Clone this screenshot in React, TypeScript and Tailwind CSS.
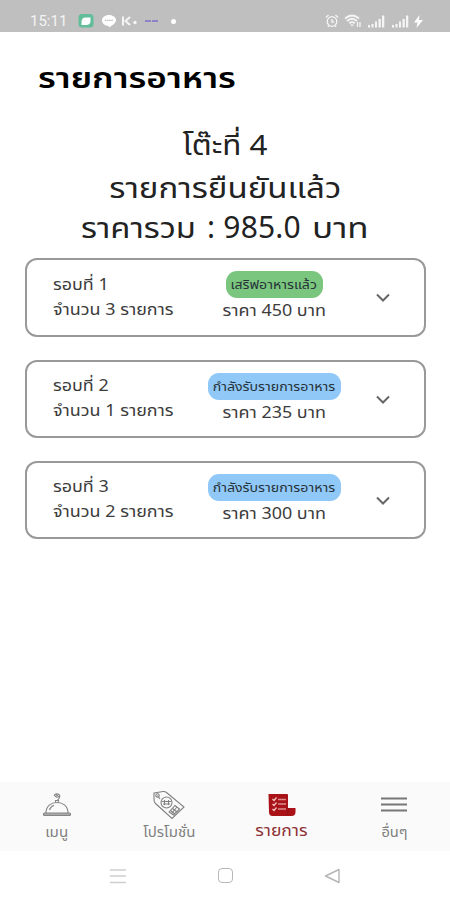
import React from 'react'

interface Round {
  title: string
  count: string
  status: string
  price: string
  served: boolean
}

const rounds: Round[] = [
  { title: 'รอบที่ 1', count: 'จำนวน 3 รายการ', status: 'เสริฟอาหารแล้ว', price: 'ราคา 450 บาท', served: true },
  { title: 'รอบที่ 2', count: 'จำนวน 1 รายการ', status: 'กำลังรับรายการอาหาร', price: 'ราคา 235 บาท', served: false },
  { title: 'รอบที่ 3', count: 'จำนวน 2 รายการ', status: 'กำลังรับรายการอาหาร', price: 'ราคา 300 บาท', served: false },
]

const SignalIcon = () => (
  <svg width="17" height="13" viewBox="0 0 17 13" fill="#f5f5f5">
    <rect x="0" y="10" width="2" height="2.5" />
    <rect x="3.5" y="9" width="2" height="3.5" />
    <rect x="7" y="6.5" width="2" height="6" />
    <rect x="10.5" y="4" width="2.3" height="8.5" />
    <rect x="14" y="0.5" width="2.3" height="12" />
  </svg>
)

const StatusBar = () => (
  <div className="h-8 bg-[#bfbfbf] pt-[11px] pl-[30px] pr-[27px] flex justify-between">
    <div className="flex items-center h-6 -mt-0.5">
      <span className="w-[39px] text-[15px] leading-6 text-[#f3f3f3] font-['Roboto',sans-serif] whitespace-nowrap">15:11</span>
      <svg className="ml-[9px]" width="16" height="16" viewBox="0 0 16 16">
        <rect x="0.5" y="1" width="15" height="13.5" rx="3.5" fill="#62bd9b" />
        <path d="M3.500 12V9q0-4.500 4-4.500h5v3.500q0 4-4.500 4z" fill="#fff" />
      </svg>
      <svg className="ml-[7px]" width="16" height="14" viewBox="0 0 16 14">
        <path d="M8 1c4 0 7 2.300 7 5.200 0 3-4 5.300-6.500 7-.8.500-.7-.3-.7-1.300C4 11.700 1 9.500 1 6.200 1 3.300 4 1 8 1z" fill="#fff" />
        <path d="M4 6.300h8" stroke="#bdbdbd" strokeWidth="1.200" strokeDasharray="1.500 .6" />
      </svg>
      <svg className="ml-[4px]" width="18" height="14" viewBox="0 0 18 14" stroke="#f5f5f5" strokeWidth="2" fill="none">
        <path d="M2 2.500v9M9 3 4.500 7 9 11" />
        <circle cx="14" cy="8.500" r="1.700" fill="#f5f5f5" stroke="none" />
      </svg>
      <svg className="ml-[6px]" width="14" height="4" viewBox="0 0 14 4">
        <path d="M0 2h13" stroke="#8b82c8" strokeWidth="2" strokeDasharray="6 1" />
      </svg>
      <span className="ml-[12px] w-[5px] h-[5px] rounded-full bg-white" />
    </div>
    <div className="flex items-center h-6 -mt-0.5">
      <svg width="14" height="14" viewBox="0 0 14 14" fill="none" stroke="#f5f5f5" strokeWidth="1.300">
        <circle cx="7" cy="7.500" r="4.800" />
        <path d="M7 5v3h2M1 3.500 3.500 1M13 3.500 10.500 1M3 13l1-1.500M11 13l-1-1.500" />
      </svg>
      <svg className="ml-[5px]" width="18" height="14" viewBox="0 0 18 14" fill="none" stroke="#f5f5f5" strokeWidth="1.800">
        <path d="M1 4.500Q8 -1.500 15 4.500M3 7Q8 2.500 13 7M5.300 9.300Q8 7 10.700 9.300" />
        <path d="m6 10.500 2 2 2-2z" fill="#f5f5f5" stroke="none" />
        <path d="M13.500 8v5M16 8v5" strokeWidth="1.300" />
      </svg>
      <span className="ml-[6px]"><SignalIcon /></span>
      <span className="ml-[7px]"><SignalIcon /></span>
      <svg className="ml-[5px]" width="9" height="13" viewBox="0 0 9 13">
        <path d="M5.500 0 0 7.500h3.500L2.500 13 9 5H5z" fill="#fff" />
      </svg>
    </div>
  </div>
)

const RoundCard: React.FC<{ round: Round }> = ({ round }) => (
  <div className="h-[78.5px] rounded-[12px] border-2 border-[#999] bg-white flex text-[#3c3c3c] text-base leading-[25px] whitespace-nowrap">
    <div className="w-[165px] pl-[26px] pt-[11.5px]">
      <div className="origin-left scale-x-[1.12]">{round.title}</div>
      <div className="origin-left scale-x-[1.12]">{round.count}</div>
    </div>
    <div className="w-[164px] pt-[11px] flex flex-col items-center">
      <div
        className={`h-[27px] rounded-[11px] flex items-center justify-center text-[12px] text-[#263238] ${
          round.served ? 'w-[97px] bg-[#7bc67e]' : 'w-[133px] bg-[#90c8f8]'
        }`}
      >
        <span className="scale-x-[1.18]">{round.status}</span>
      </div>
      <div className="scale-x-[1.12]">{round.price}</div>
    </div>
    <svg className="ml-[19px] mt-[32px]" width="16" height="12" viewBox="0 0 16 12" fill="none">
      <path d="m2 2.500 6 6 6-6" stroke="#666" strokeWidth="2" />
    </svg>
  </div>
)

const MenuIcon = () => (
  <svg width="30" height="26" viewBox="0 0 30 26" fill="none" stroke="#858585" strokeWidth="1.100">
    <path d="M4 21C4 14 9 10.500 15 10.500S26 14 26 21" />
    <path d="M7.500 18c.7-2.500 2.500-4 4.500-4.700" />
    <rect x="1.500" y="21" width="27" height="2.500" rx="1" fill="#aaa" />
    <path d="M13.500 10.500V8.500h3v2M12 3.500c2-3 7-1.500 5.500 2l-2 3M12 3.500c1.500 0 2 2 3.500 2M14 2.500l3 2.500" />
  </svg>
)

const PromotionIcon = () => (
  <svg width="34" height="30" viewBox="0 0 34 30" fill="none" stroke="#808080" strokeWidth="1.100">
    <path d="M2 3 11 1.500q2-.3 3.500 1L32 17 20 28.500 3.500 13.500Q2 12 2 10z" />
    <circle cx="5.500" cy="5.500" r="1.700" />
    <circle cx="14.500" cy="12.500" r="5.500" />
    <path d="M10 11.500h9M11 14h7M12.500 10v5M16.500 10v5M5.500 5.500 8 9" />
    <path d="m17 22 6-6.500 4.500 3.500-6 6zM18.500 20.500l4.500 3.500M20.500 18.500l4.500 3.500M19.500 23.500l5-6" />
  </svg>
)

const ListIcon = () => (
  <svg width="30" height="26" viewBox="0 0 30 26" fill="none">
    <path d="M1.500 2h18.500q1 0 1 1v13h7.500v4q0 4-4 4H5.500q-3.500 0-3.500-4z" fill="#a91318" />
    <path d="M21 16v3q0 3-2 4.500" stroke="#8e1115" />
    <path d="M11 7.500h8M11 12h8M11 17h8" stroke="#dd8c8e" strokeWidth="1.400" />
    <path d="m5.500 7 1.500 1.500L9.500 5.500M5.500 12 7 13.500l2.500-3M5.500 17 7 18.500l2.500-3" stroke="#f4c8c8" strokeWidth="1.200" />
  </svg>
)

const BottomNav = () => (
  <nav className="h-[69px] bg-[#fafafa] flex text-[#808080] text-[14px] leading-5 whitespace-nowrap">
    <div className="w-[113px] flex flex-col items-center pt-[10px]">
      <MenuIcon />
      <span className="mt-[4px] scale-x-[1.08]">เมนู</span>
    </div>
    <div className="w-[112px] flex flex-col items-center pt-[8px]">
      <PromotionIcon />
      <span className="mt-[2px] scale-x-[1.07]">โปรโมชั่น</span>
    </div>
    <div className="w-[113px] flex flex-col items-center pt-[10px] text-[#8e3034]">
      <ListIcon />
      <span className="mt-[2px] text-[15px] scale-x-[1.17]">รายการ</span>
    </div>
    <div className="w-[112px] flex flex-col items-center pt-[14px]">
      <svg width="26" height="18" viewBox="0 0 26 18" stroke="#777" strokeWidth="2">
        <path d="M0 2.500h26M0 8.500h26M0 14.500h26" />
      </svg>
      <span className="mt-[8px] scale-x-[1.05]">อื่นๆ</span>
    </div>
  </nav>
)

export default function App() {
  return (
    <div className="w-[450px] h-[900px] bg-white flex flex-col overflow-hidden font-['Noto_Sans','Noto_Sans_Thai',sans-serif]">
      <StatusBar />
      <h1 className="mt-[25px] ml-[38px] h-10 text-[29px] leading-10 font-semibold text-black whitespace-nowrap origin-left scale-x-[1.21]">
        รายการอาหาร
      </h1>
      <div className="mt-[27px] text-[28px] leading-10 text-[#222] whitespace-nowrap flex flex-col items-center">
        <p className="h-[43px] scale-x-[1.12]">โต๊ะที่ 4</p>
        <p className="h-[40px] scale-x-[1.18]">รายการยืนยันแล้ว</p>
        <p className="h-[40px] flex">
          <span className="w-[115px] origin-left scale-x-[1.17]">ราคารวม</span>
          <span className="w-[116px] text-center text-[30px] tracking-[0.2px]">: 985.0</span>
          <span className="w-[57px]">
            <span className="inline-block origin-left scale-x-[1.25]">บาท</span>
          </span>
        </p>
      </div>
      <main className="mt-[11.4px] ml-[25px] mr-[24px] flex flex-col gap-[22.8px]">
        {rounds.map((round) => (
          <RoundCard key={round.title} round={round} />
        ))}
      </main>
      <div className="mt-auto">
        <BottomNav />
        <div className="h-[49px] flex items-center">
          <svg className="ml-[110px]" width="16" height="18" viewBox="0 0 16 18" stroke="#cfcfcf" strokeWidth="1.500">
            <path d="M0 3h16M0 9h16M0 15.500h16" />
          </svg>
          <span className="ml-[92px] w-[15px] h-[15px] border-[1.500px] border-[#b8b8b8] rounded-[4px]" />
          <svg className="ml-[91px]" width="17" height="16" viewBox="0 0 17 16" fill="none" stroke="#b5b5b5" strokeWidth="1.400">
            <path d="M15 1.500v13L1.500 8z" strokeLinejoin="round" />
          </svg>
        </div>
      </div>
    </div>
  )
}
